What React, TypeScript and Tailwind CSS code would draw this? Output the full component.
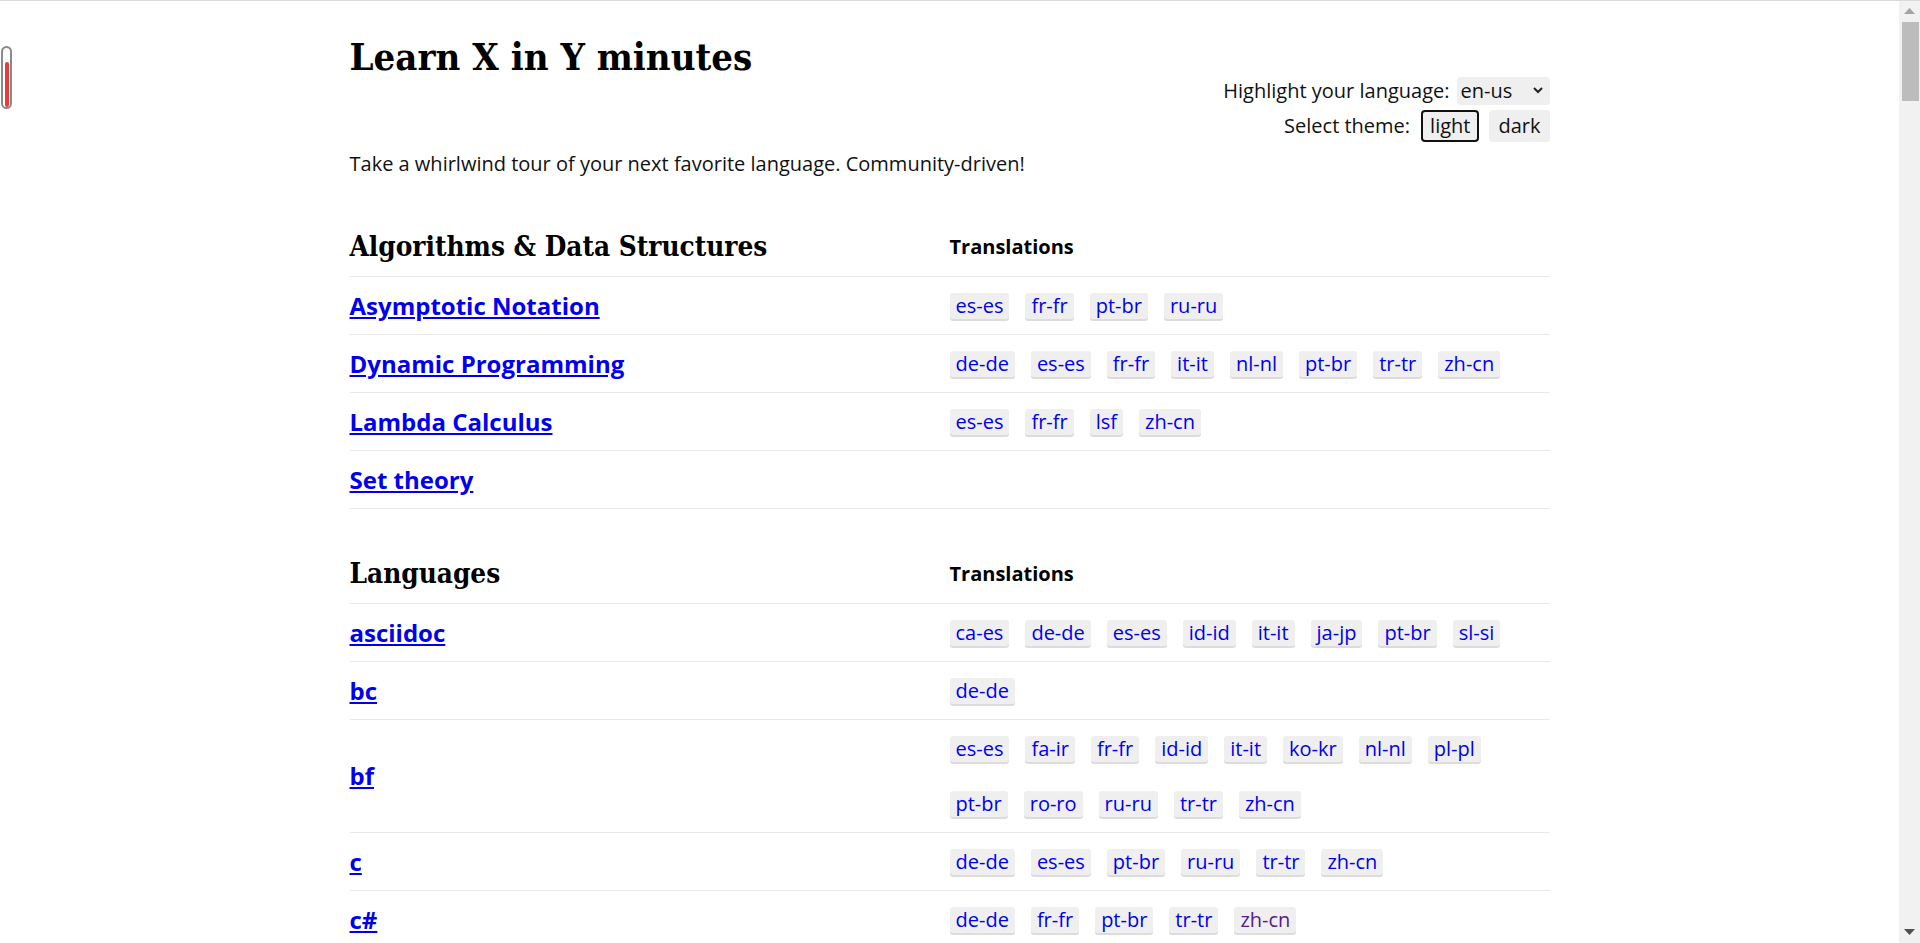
import React from "react";

type Row = [string, string[]];

const algos: Row[] = [
  ["Asymptotic Notation", ["es-es", "fr-fr", "pt-br", "ru-ru"]],
  ["Dynamic Programming", ["de-de", "es-es", "fr-fr", "it-it", "nl-nl", "pt-br", "tr-tr", "zh-cn"]],
  ["Lambda Calculus", ["es-es", "fr-fr", "lsf", "zh-cn"]],
  ["Set theory", []],
];

const languages: Row[] = [
  ["asciidoc", ["ca-es", "de-de", "es-es", "id-id", "it-it", "ja-jp", "pt-br", "sl-si"]],
  ["bc", ["de-de"]],
  ["bf", ["es-es", "fa-ir", "fr-fr", "id-id", "it-it", "ko-kr", "nl-nl", "pl-pl", "pt-br", "ro-ro", "ru-ru", "tr-tr", "zh-cn"]],
  ["c", ["de-de", "es-es", "pt-br", "ru-ru", "tr-tr", "zh-cn"]],
  ["c#", ["de-de", "fr-fr", "pt-br", "tr-tr", "*zh-cn"]],
  ["c++", ["de-de", "es-es", "fr-fr", "it-it", "ko-kr", "pt-br", "ru-ru", "tr-tr"]],
  ["chapel", []],
  ["clojure", ["es-es", "fr-fr", "ja-jp", "ko-kr", "pt-br", "ru-ru", "tr-tr", "zh-cn"]],
  ["coffeescript", ["de-de", "es-es", "fr-fr", "pt-br", "ru-ru", "ta-in", "zh-cn"]],
  ["common lisp", ["ko-kr", "pt-br", "zh-cn"]],
  ["crystal", ["bg-bg", "pt-br"]],
  ["css", ["de-de", "es-es", "fa-ir", "fr-fr", "it-it", "pt-br", "ru-ru", "tr-tr", "zh-cn"]],
  ["d", ["fr-fr", "hu-hu", "pt-br", "zh-cn"]],
  ["dart", ["de-de", "hu-hu", "pt-br", "zh-cn"]],
  ["elixir", ["de-de", "es-es", "it-it", "pt-br", "zh-cn"]],
  ["elm", ["es-es", "fr-fr", "pt-br"]],
  ["erlang", ["es-es", "fr-fr", "pt-br", "ru-ru", "zh-cn"]],
  ["f#", ["de-de"]],
  ["fortran", ["pt-br", "zh-cn"]],
  ["go", ["ca-es", "de-de", "es-es", "fr-fr", "it-it", "ko-kr", "pt-br", "ru-ru", "zh-cn"]],
  ["groovy", ["es-es", "pt-br", "zh-cn"]],
  ["haskell", ["de-de", "el-gr", "es-es", "fr-fr", "it-it", "pl-pl", "pt-br", "ro-ro", "zh-cn"]],
  ["html", ["ar-ar", "de-de", "es-es", "fa-ir", "fr-fr", "it-it", "ko-kr", "pl-pl", "pt-br", "ru-ru", "tr-tr", "zh-cn"]],
  ["java", ["cs-cz", "de-de", "el-gr", "es-es", "fr-fr", "it-it", "ja-jp", "ko-kr", "pt-br", "ro-ro", "ru-ru", "zh-cn"]],
  ["javascript", ["ca-es", "de-de", "es-es", "fa-ir", "fr-fr", "it-it", "ja-jp", "ko-kr", "pt-br", "ru-ru", "zh-cn"]],
  ["json", ["de-de", "es-es", "fr-fr", "it-it", "ko-kr", "pt-br", "ru-ru", "zh-cn"]],
  ["julia", ["es-es", "ja-jp", "ko-kr", "pt-br", "zh-cn"]],
  ["kotlin", ["es-es", "fr-fr", "it-it", "ko-kr", "pt-br", "tr-tr"]],
  ["lua", ["de-de", "es-es", "fr-fr", "ko-kr", "pt-br", "ru-ru", "zh-cn"]],
  ["markdown", ["de-de", "es-es", "fr-fr", "it-it", "ko-kr", "pt-br", "ru-ru", "zh-cn"]],
  ["matlab", ["es-es", "pt-br", "zh-cn"]],
  ["nim", ["de-de", "fr-fr", "pt-br"]],
  ["ocaml", ["es-es", "fr-fr"]],
  ["perl", ["de-de", "fr-fr", "pl-pl", "pt-br", "zh-cn"]],
  ["php", ["cs-cz", "de-de", "es-es", "fr-fr", "it-it", "ko-kr", "pt-br", "ru-ru", "tr-tr", "zh-cn"]],
  ["python", ["ar-ar", "cs-cz", "de-de", "el-gr", "es-es", "fr-fr", "it-it", "ja-jp", "pl-pl", "pt-br", "ru-ru", "tr-tr", "zh-cn"]],
  ["r", ["fr-fr", "pt-br", "zh-cn"]],
  ["racket", ["de-de", "es-es", "pt-br", "zh-cn"]],
  ["ruby", ["de-de", "es-es", "fr-fr", "it-it", "ja-jp", "ko-kr", "pt-br", "ru-ru", "zh-cn"]],
  ["rust", ["de-de", "es-es", "fr-fr", "it-it", "pt-br", "ru-ru", "zh-cn"]],
  ["scala", ["de-de", "es-es", "fr-fr", "it-it", "pt-br", "ru-ru", "zh-cn"]],
  ["sql", ["es-es", "pt-br", "zh-cn"]],
  ["swift", ["de-de", "es-es", "fr-fr", "it-it", "ko-kr", "pt-br", "ru-ru", "zh-cn"]],
  ["typescript", ["de-de", "es-es", "fr-fr", "it-it", "ko-kr", "pt-br", "ru-ru", "zh-cn"]],
  ["yaml", ["de-de", "es-es", "fr-fr", "it-it", "ko-kr", "pt-br", "ru-ru", "zh-cn"]],
  ["zig", []],
];

function Tag({ code }: { code: string }) {
  const visited = code.startsWith("*");
  const label = visited ? code.slice(1) : code;
  return (
    <a
      href="#"
      className={
        "h-[26px] px-[6px] rounded-[3px] bg-[#efefef] shadow-[0_2px_0_#dcdcdc] leading-[26px] no-underline " +
        (visited ? "text-[#551a8b]" : "text-[#0000ee]")
      }
    >
      {label}
    </a>
  );
}

function Section({ title, rows, className }: { title: string; rows: Row[]; className: string }) {
  return (
    <section className={className}>
      <div className="grid grid-cols-2 h-[50px] items-center border-b border-[#e8e8e8] pb-[9px]">
        <h2 className="font-['DejaVu_Serif_Condensed','DejaVu_Serif',serif] font-bold text-[27.7px] leading-[36px] text-black">
          {title}
        </h2>
        <div className="font-bold text-black">Translations</div>
      </div>
      {rows.map(([name, tags]) => (
        <div key={name} className="grid grid-cols-2 min-h-[58px] border-b border-[#e8e8e8]">
          <div className="flex items-center">
            <a href="#" className="text-[24px] font-bold text-[#0000ee] underline">
              {name}
            </a>
          </div>
          <div className="flex flex-wrap content-start gap-x-[16px] gap-y-[29px] pt-[16px] pb-[15px] pr-[20px]">
            {tags.map((t, i) => (
              <Tag key={t + i} code={t} />
            ))}
          </div>
        </div>
      ))}
    </section>
  );
}

function FakeScrollbar() {
  return (
    <div className="fixed top-[1px] right-0 bottom-0 w-[21px] bg-[#f1f1f1] flex flex-col items-center">
      <svg className="mt-[7px]" width="11" height="6" viewBox="0 0 11 6">
        <polygon points="0,6 5.5,0 11,6" fill="#a3a3a3" />
      </svg>
      <div className="mt-[8px] ml-[2px] w-[17px] h-[79px] bg-[#bcbcbc]" />
      <div className="flex-1" />
      <svg className="mb-[8px]" width="11" height="6" viewBox="0 0 11 6">
        <polygon points="0,0 11,0 5.5,6" fill="#505050" />
      </svg>
    </div>
  );
}

export default function App() {
  return (
    <div className="min-h-screen bg-white border-t border-[#dadada] pr-[21px] font-['Open_Sans',sans-serif] text-[20px] text-[#111]">
      <div className="fixed left-[1px] top-[46px] w-[11px] h-[63px] rounded-full border-2 border-[#8a8a8a] bg-white flex items-end justify-center">
        <div className="w-[4px] h-[45px] rounded-full bg-[#f03a3a]" />
      </div>
      <FakeScrollbar />
      <main className="max-w-[1200px] mx-auto pb-[40px]">
        <header className="flex justify-between items-start">
          <h1 className="mt-[32px] font-['DejaVu_Serif_Condensed','DejaVu_Serif',serif] font-bold text-[38px] leading-[48px] text-black">
            Learn X in Y minutes
          </h1>
          <div className="mt-[76px] flex flex-col items-end gap-[5px]">
            <div className="flex items-center h-[28px]">
              <label>Highlight your language:</label>
              <div className="relative ml-[7px]">
                <select className="appearance-none h-[28px] w-[93px] rounded-[4px] bg-[#efefef] pl-[4px] pr-[24px] text-[20px] leading-[28px] text-[#111] outline-none">
                  <option>en-us</option>
                </select>
                <svg
                  className="pointer-events-none absolute right-[7px] top-[11px]"
                  width="10"
                  height="7"
                  viewBox="0 0 10 7"
                  fill="none"
                >
                  <polyline points="1,1 5,5 9,1" stroke="#222" strokeWidth="2" />
                </svg>
              </div>
            </div>
            <div className="flex items-center h-[32px]">
              <span>Select theme:</span>
              <button className="ml-[11px] h-[32px] px-[7px] rounded-[4px] border-2 border-[#111] bg-[#efefef] leading-[26px] text-[#111]">
                light
              </button>
              <button className="ml-[10px] h-[32px] px-[7px] rounded-[4px] border-2 border-transparent bg-[#efefef] leading-[26px] text-[#111]">
                dark
              </button>
            </div>
          </div>
        </header>
        <p className="mt-[7px] leading-[30px]">
          Take a whirlwind tour of your next favorite language. Community-driven!
        </p>
        <Section className="mt-[48px]" title="Algorithms & Data Structures" rows={algos} />
        <Section className="mt-[45px]" title="Languages" rows={languages} />
      </main>
    </div>
  );
}
